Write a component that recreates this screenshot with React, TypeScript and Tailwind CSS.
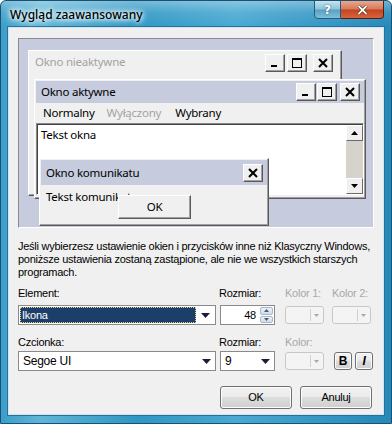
const dlg = "font-['Liberation_Sans',Arial,sans-serif] text-[11px] tracking-[-0.25px]";
const pv = "font-['Noto_Sans','Open_Sans',sans-serif] text-[11.5px]";

function CapBtn({ kind }: { kind: "min" | "max" | "close" }) {
  return (
    <div className="w-[20px] h-[18px] bg-[#f0f0f0] border border-t-white border-l-white border-r-[#5a5a5a] border-b-[#5a5a5a] shadow-[inset_-1px_-1px_#a0a0a0] flex items-center justify-center">
      <svg width="10" height="10" viewBox="0 0 10 10">
        {kind === "min" && <rect x="1" y="7" width="6" height="2" fill="#000" />}
        {kind === "max" && (
          <>
            <rect x="0.5" y="0.5" width="9" height="9" fill="none" stroke="#000" />
            <rect x="0" y="0" width="10" height="2" fill="#000" />
          </>
        )}
        {kind === "close" && <path d="M1 1 L9 9 M9 1 L1 9" stroke="#000" strokeWidth="2" />}
      </svg>
    </div>
  );
}

function ScrollBtn({ up }: { up?: boolean }) {
  return (
    <div className="w-[17px] h-[16px] bg-[#f0f0f0] border border-t-white border-l-white border-r-[#6a6a6a] border-b-[#6a6a6a] flex items-center justify-center">
      <svg width="7" height="4" viewBox="0 0 7 4">
        <path d={up ? "M0 4 L3.5 0 L7 4 Z" : "M0 0 L3.5 4 L7 0 Z"} fill="#000" />
      </svg>
    </div>
  );
}

function Arrow() {
  return (
    <svg width="9" height="5" viewBox="0 0 9 5">
      <path d="M0 0 L9 0 L4.5 5 Z" fill="#1c1c3c" />
    </svg>
  );
}

function ColorBtn() {
  return (
    <div className="w-[39px] h-[18px] rounded-[3px] border border-[#c8c8c8] bg-[#f4f4f4] flex items-center justify-end pr-[4px] gap-[3px]">
      <div className="w-px h-[12px] bg-[#d0d0d0]" />
      <svg width="5" height="3" viewBox="0 0 5 3">
        <path d="M0 0 L5 0 L2.5 3 Z" fill="#a8a8a8" />
      </svg>
    </div>
  );
}

function VistaBtn({ children, className = "" }: { children: React.ReactNode; className?: string }) {
  return (
    <div
      className={`rounded-[3px] border border-[#707070] bg-[linear-gradient(#f2f2f2_0%,#ebebeb_45%,#dddddd_50%,#cfcfcf_100%)] shadow-[inset_0_0_0_1px_#fcfcfc] flex items-center justify-center text-black ${className}`}
    >
      {children}
    </div>
  );
}

function Preview() {
  return (
    <div className="relative h-[190px] bg-[#c6cbde] border border-t-[#8a8a8a] border-l-[#8a8a8a] border-r-white border-b-white overflow-hidden">
      {/* inactive window */}
      <div className="absolute left-[9px] top-[11px] w-[314px] h-[146px] bg-[#f0f0f0] border border-t-white border-l-white border-r-[#5a5a5a] border-b-[#5a5a5a] shadow-[inset_-1px_-1px_#a0a0a0]">
        <div className={`${pv} h-[22px] flex items-center pl-[6px] pr-[8px] text-[#a3a3a3]`}>
          <span className="flex-1">Okno nieaktywne</span>
          <div className="flex gap-[2px] mt-[1px]">
            <CapBtn kind="min" />
            <CapBtn kind="max" />
            <div className="w-[2px]" />
            <CapBtn kind="close" />
          </div>
        </div>
      </div>

      {/* active window */}
      <div className="absolute left-[15px] top-[40px] w-[332px] h-[120px] bg-[#f0f0f0] border border-t-white border-l-white border-r-[#5a5a5a] border-b-[#5a5a5a] shadow-[inset_-1px_-1px_#a0a0a0] flex flex-col">
        <div className={`${pv} h-[22px] mx-[1px] mt-[1px] bg-[#c6cbde] flex items-center pl-[5px] pr-[4px] text-black`}>
          <span className="flex-1">Okno aktywne</span>
          <div className="flex gap-[1px]">
            <CapBtn kind="min" />
            <CapBtn kind="max" />
            <div className="w-[1px]" />
            <CapBtn kind="close" />
          </div>
        </div>
        <div className={`${pv} h-[20px] flex items-center pl-[8px]`}>
          <span className="text-black">Normalny</span>
          <span className="ml-[12px] text-[#a3a3a3]">Wyłączony</span>
          <span className="ml-[14px] text-black">Wybrany</span>
        </div>
        <div className="mx-[1px] h-[72px] bg-white border border-t-[#8a8a8a] border-l-[#8a8a8a] border-r-white border-b-white shadow-[inset_1px_1px_#404040] flex">
          <div className={`${pv} flex-1 pl-[4px] pt-[2px] text-black`}>Tekst okna</div>
          <div className="w-[17px] mt-[1px] flex flex-col bg-[#d6d3cc]">
            <ScrollBtn up />
            <div className="flex-1" />
            <ScrollBtn />
          </div>
        </div>
      </div>

      {/* message box */}
      <div className="absolute left-[20px] top-[119px] w-[230px] h-[68px] bg-[#f0f0f0] border border-t-white border-l-white border-r-[#5a5a5a] border-b-[#5a5a5a] shadow-[inset_-1px_-1px_#a0a0a0]">
        <div className={`${pv} h-[25px] mx-[1px] mt-[1px] bg-[#c6cbde] flex items-center pl-[5px] pr-[4px] text-black`}>
          <span className="flex-1">Okno komunikatu</span>
          <CapBtn kind="close" />
        </div>
        <div className={`${pv} pl-[6px] pt-[3px] text-black`}>Tekst komunikatu</div>
        <div className={`${pv} absolute left-[78px] top-[36px] w-[73px] h-[24px] bg-[#f0f0f0] border border-t-white border-l-white border-r-[#5a5a5a] border-b-[#5a5a5a] shadow-[inset_-1px_-1px_#a0a0a0] flex items-center justify-center text-black`}>
          OK
        </div>
      </div>
    </div>
  );
}

export default function App() {
  return (
    <div className="w-[392px] h-[424px] overflow-hidden flex flex-col rounded-t-[6px] border border-[#1d4f72] bg-[linear-gradient(90deg,#3a9ec9_0%,#5fb6d7_10%,#2f97c4_35%,#49a9d2_60%,#2489b9_100%)]">
      {/* title bar */}
      <div className="h-[26px] flex items-start relative bg-[linear-gradient(180deg,rgba(255,255,255,0.35)_0%,rgba(255,255,255,0.1)_45%,rgba(0,0,0,0)_100%)]">
        <span className="ml-[9px] mt-[7px] font-['Noto_Sans',sans-serif] font-medium text-[12px] leading-[14px] text-black [text-shadow:0_0_4px_#fff,0_0_6px_#fff,0_0_8px_#e0f4ff]">
          Wygląd zaawansowany
        </span>
        <div className="ml-auto mr-[7px] flex -mt-px">
          <div className="w-[27px] h-[19px] rounded-bl-[4px] border border-[#2a5a7a] bg-[linear-gradient(180deg,#c7e3ef_0%,#8cc3da_48%,#5aa0c0_52%,#7cc0dc_100%)] flex items-center justify-center text-white font-bold text-[12px] font-['DejaVu_Sans',sans-serif] [text-shadow:0_0_2px_#24506c]">
            ?
          </div>
          <div className="w-[43px] h-[19px] rounded-br-[4px] border border-l-0 border-[#5a1a10] bg-[linear-gradient(180deg,#e8a890_0%,#d87858_48%,#c24422_52%,#d8643c_100%)] flex items-center justify-center">
            <svg width="11" height="10" viewBox="0 0 11 10">
              <path d="M1.5 1 L9.5 9 M9.5 1 L1.5 9" stroke="#3a1008" strokeWidth="3" />
              <path d="M1.5 1 L9.5 9 M9.5 1 L1.5 9" stroke="#fff" strokeWidth="1.8" />
            </svg>
          </div>
        </div>
      </div>

      {/* client area */}
      <div className="flex-1 ml-[7px] mr-[7px] mb-[8px] border border-[#cfe6f2] bg-[#f0f0f0] shadow-[0_0_0_1px_#2b6f98]">
        <div className={`${dlg} flex flex-col px-[9px] pt-[10px] text-black`}>
          <Preview />
          <p className="mt-[12px] leading-[13px] whitespace-nowrap">
            Jeśli wybierzesz ustawienie okien i przycisków inne niż Klasyczny Windows,
            <br />
            poniższe ustawienia zostaną zastąpione, ale nie we wszystkich starszych
            <br />
            programach.
          </p>

          <div className="mt-[8px] flex leading-[13px]">
            <div className="w-[201px]">Element:</div>
            <div className="w-[66px]">Rozmiar:</div>
            <div className="w-[47px] text-[#a8a8a8]">Kolor 1:</div>
            <div className="text-[#a8a8a8]">Kolor 2:</div>
          </div>
          <div className="mt-[5px] flex items-center">
            <div className="w-[198px] h-[20px] border border-[#8a8a8a] bg-white flex items-center p-[1px]">
              <div className="flex-1 h-full bg-[#1c3f6a] text-white flex items-center pl-[2px] outline-1 outline-dotted outline-[#f0d080] -outline-offset-1">
                Ikona
              </div>
              <div className="w-[18px] flex justify-center">
                <Arrow />
              </div>
            </div>
            <div className="ml-[4px] w-[55px] h-[20px] border border-[#8a8a8a] bg-white flex items-center">
              <span className="flex-1 text-right pr-[4px]">48</span>
              <div className="w-[14px] h-full flex flex-col gap-px py-px pr-px">
                <div className="flex-1 rounded-[2px] border border-[#a6b8cc] bg-[linear-gradient(#eef3f8,#cfdbe7)] flex items-center justify-center">
                  <svg width="5" height="3" viewBox="0 0 5 3"><path d="M0 3 L2.5 0 L5 3 Z" fill="#4a5a6a" /></svg>
                </div>
                <div className="flex-1 rounded-[2px] border border-[#a6b8cc] bg-[linear-gradient(#eef3f8,#cfdbe7)] flex items-center justify-center">
                  <svg width="5" height="3" viewBox="0 0 5 3"><path d="M0 0 L2.5 3 L5 0 Z" fill="#4a5a6a" /></svg>
                </div>
              </div>
            </div>
            <div className="ml-[10px]"><ColorBtn /></div>
            <div className="ml-[8px]"><ColorBtn /></div>
          </div>

          <div className="mt-[11px] flex leading-[13px]">
            <div className="w-[201px]">Czcionka:</div>
            <div className="w-[66px]">Rozmiar:</div>
            <div className="text-[#a8a8a8]">Kolor:</div>
          </div>
          <div className="mt-[2px] flex items-center">
            <div className="w-[198px] h-[20px] border border-[#8a8a8a] bg-white flex items-center">
              <span className="flex-1 pl-[4px] text-[12px]">Segoe UI</span>
              <div className="w-[18px] flex justify-center">
                <Arrow />
              </div>
            </div>
            <div className="ml-[4px] w-[55px] h-[20px] border border-[#8a8a8a] bg-white flex items-center">
              <span className="flex-1 pl-[4px] text-[12px]">9</span>
              <div className="w-[18px] flex justify-center">
                <Arrow />
              </div>
            </div>
            <div className="ml-[10px]"><ColorBtn /></div>
            <div className="ml-[10px] flex gap-[3px]">
              <VistaBtn className="w-[18px] h-[18px] font-bold text-[12px]">B</VistaBtn>
              <VistaBtn className="w-[18px] h-[18px] italic font-bold text-[12px]">I</VistaBtn>
            </div>
          </div>

          <div className="mt-[15px] flex justify-end gap-[8px] pr-[2px]">
            <VistaBtn className="w-[72px] h-[23px]">OK</VistaBtn>
            <VistaBtn className="w-[72px] h-[23px]">Anuluj</VistaBtn>
          </div>
        </div>
      </div>
    </div>
  );
}
